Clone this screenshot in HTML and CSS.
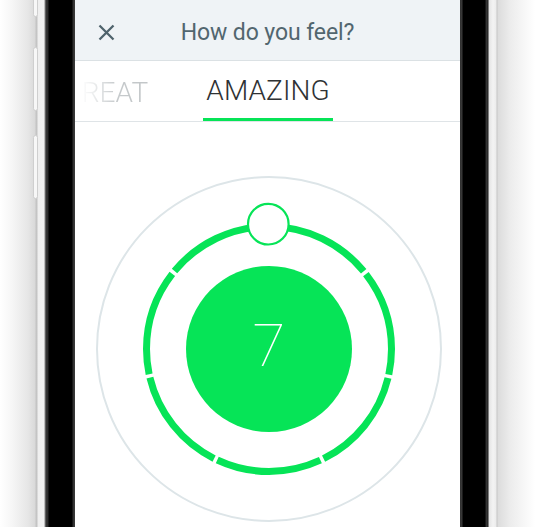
FILE: index.html
```html
<!DOCTYPE html>
<html lang="en">
<head>
<meta charset="utf-8">
<title>How do you feel?</title>
<link rel="stylesheet" href="styles.css">
</head>
<body>
<div class="device">
  <div class="bezel bezel-left">
    <span class="side-btn btn-a"></span>
    <span class="side-btn btn-b"></span>
    <span class="side-btn btn-c"></span>
  </div>
  <main class="screen">
    <header class="topbar">
      <button class="close" aria-label="Close">
        <svg width="17" height="17" viewBox="0 0 17 17"><path d="M1.5 1.5 L15.5 15.5 M15.5 1.5 L1.5 15.5" stroke="#4f636c" stroke-width="2.3" stroke-linecap="butt" fill="none"/></svg>
      </button>
      <h1 class="title">How do you feel?</h1>
      <span class="spacer"></span>
    </header>
    <nav class="tabs">
      <div class="tab-side"><span class="tab tab-faded">GREAT</span></div>
      <span class="tab tab-active">AMAZING</span>
      <div class="tab-side"></div>
    </nav>
    <section class="dial-area">
      <div class="dial">
        <svg class="dial-svg" width="350" height="350" viewBox="0 0 350 350">
          <circle cx="175" cy="175" r="172" fill="none" stroke="#dde5e8" stroke-width="2"/>
          <circle cx="175" cy="175" r="122.5" fill="none" stroke="#06e457" stroke-width="7" stroke-dasharray="106.46 3.5" stroke-dashoffset="-1.75" transform="rotate(-90 175 175)"/>
          <circle cx="175" cy="175" r="83" fill="#06e457"/>
          <circle cx="174.3" cy="50.2" r="20.3" fill="#ffffff" stroke="#06e457" stroke-width="2.2"/>
        </svg>
        <div class="value">7</div>
      </div>
    </section>
  </main>
  <div class="bezel bezel-right"></div>
</div>
</body>
</html>
```
FILE: styles.css
```css
* { box-sizing: border-box; }

html, body {
  margin: 0;
  padding: 0;
}

body {
  width: 535px;
  height: 527px;
  overflow: hidden;
  background: #ffffff;
  font-family: Roboto, "Liberation Sans", sans-serif;
}

.device {
  display: flex;
  height: 527px;
}

.bezel {
  width: 75px;
  flex: none;
  height: 100%;
}

.bezel-left {
  position: relative;
  background: linear-gradient(to right,
    #ffffff 0px,
    #f6f6f6 12px,
    #e6e6e6 28px,
    #d9d9d9 35px,
    #c4c4c4 36px,
    #c4c4c4 37px,
    #efefef 38px,
    #f1f1f1 44px,
    #8a8a8a 45px,
    #363636 46px,
    #2a2a2a 48px,
    #000000 49px,
    #000000 72px,
    #2e2e2e 73px,
    #3a3a3a 75px);
}

.side-btn {
  position: absolute;
  left: 33px;
  width: 5px;
  border: 1px solid #cfcfcf;
  border-radius: 3px;
  background: #f7f7f7;
}

.btn-a { top: -10px; height: 27px; }
.btn-b { top: 47px; height: 64px; }
.btn-c { top: 135px; height: 64px; }

.bezel-right {
  background: linear-gradient(to right,
    #303030 0px,
    #3a3a3a 2px,
    #000000 3px,
    #000000 25px,
    #2c2c2c 26px,
    #3a3a3a 27px,
    #1a1a1a 28px,
    #e4e4e4 29px,
    #f3f3f3 33px,
    #ececec 36px,
    #c6c6c6 37px,
    #dcdcdc 38px,
    #ececec 50px,
    #ffffff 75px);
}

.screen {
  width: 385px;
  flex: none;
  display: flex;
  flex-direction: column;
  background: #ffffff;
  overflow: hidden;
}

.topbar {
  height: 61px;
  flex: none;
  display: grid;
  grid-template-columns: 1fr auto 1fr;
  align-items: center;
  padding: 4px 0 0 0;
  background: #eff3f6;
  border-bottom: 1px solid #dbe1e4;
}

.close {
  justify-self: start;
  margin-left: 23px;
  padding: 0;
  border: 0;
  background: none;
  width: 17px;
  height: 17px;
  display: flex;
}

.title {
  margin: 0;
  font-size: 23px;
  font-weight: 400;
  color: #52666f;
  letter-spacing: -0.1px;
  line-height: 1;
}

.tabs {
  height: 61px;
  flex: none;
  display: flex;
  border-bottom: 1px solid #dfe4e7;
  overflow: hidden;
}

.tab-side {
  flex: 1 1 0;
  min-width: 0;
  display: flex;
  justify-content: flex-end;
}

.tab {
  display: flex;
  align-items: center;
  height: 60px;
  padding: 2px 3px 0;
  font-size: 28px;
  font-weight: 300;
  color: #2f3234;
  white-space: nowrap;
  letter-spacing: 0.1px;
}

.tab-active {
  border-bottom: 3px solid #06e457;
  margin-left: 1px;
}

.tab-faded {
  flex: none;
  margin-right: 51px;
  color: transparent;
  background: linear-gradient(to right, rgba(200,204,206,0) 0%, rgba(200,204,206,0) 24%, rgba(200,204,206,0.3) 36%, #c6cacc 62%, #c2c6c8 100%);
  -webkit-background-clip: text;
  background-clip: text;
}

.dial-area {
  flex: 1;
  display: flex;
  justify-content: center;
  padding: 52px 0 0 3px;
  background: #ffffff;
}

.dial {
  display: grid;
  width: 350px;
  height: 350px;
}

.dial-svg,
.value {
  grid-area: 1 / 1;
}

.dial-svg {
  display: block;
}

.value {
  align-self: center;
  justify-self: center;
  margin-bottom: 6px;
  font-family: Roboto, "Liberation Sans", sans-serif;
  font-weight: 100;
  font-size: 60px;
  line-height: 1;
  color: #ffffff;
}
```
